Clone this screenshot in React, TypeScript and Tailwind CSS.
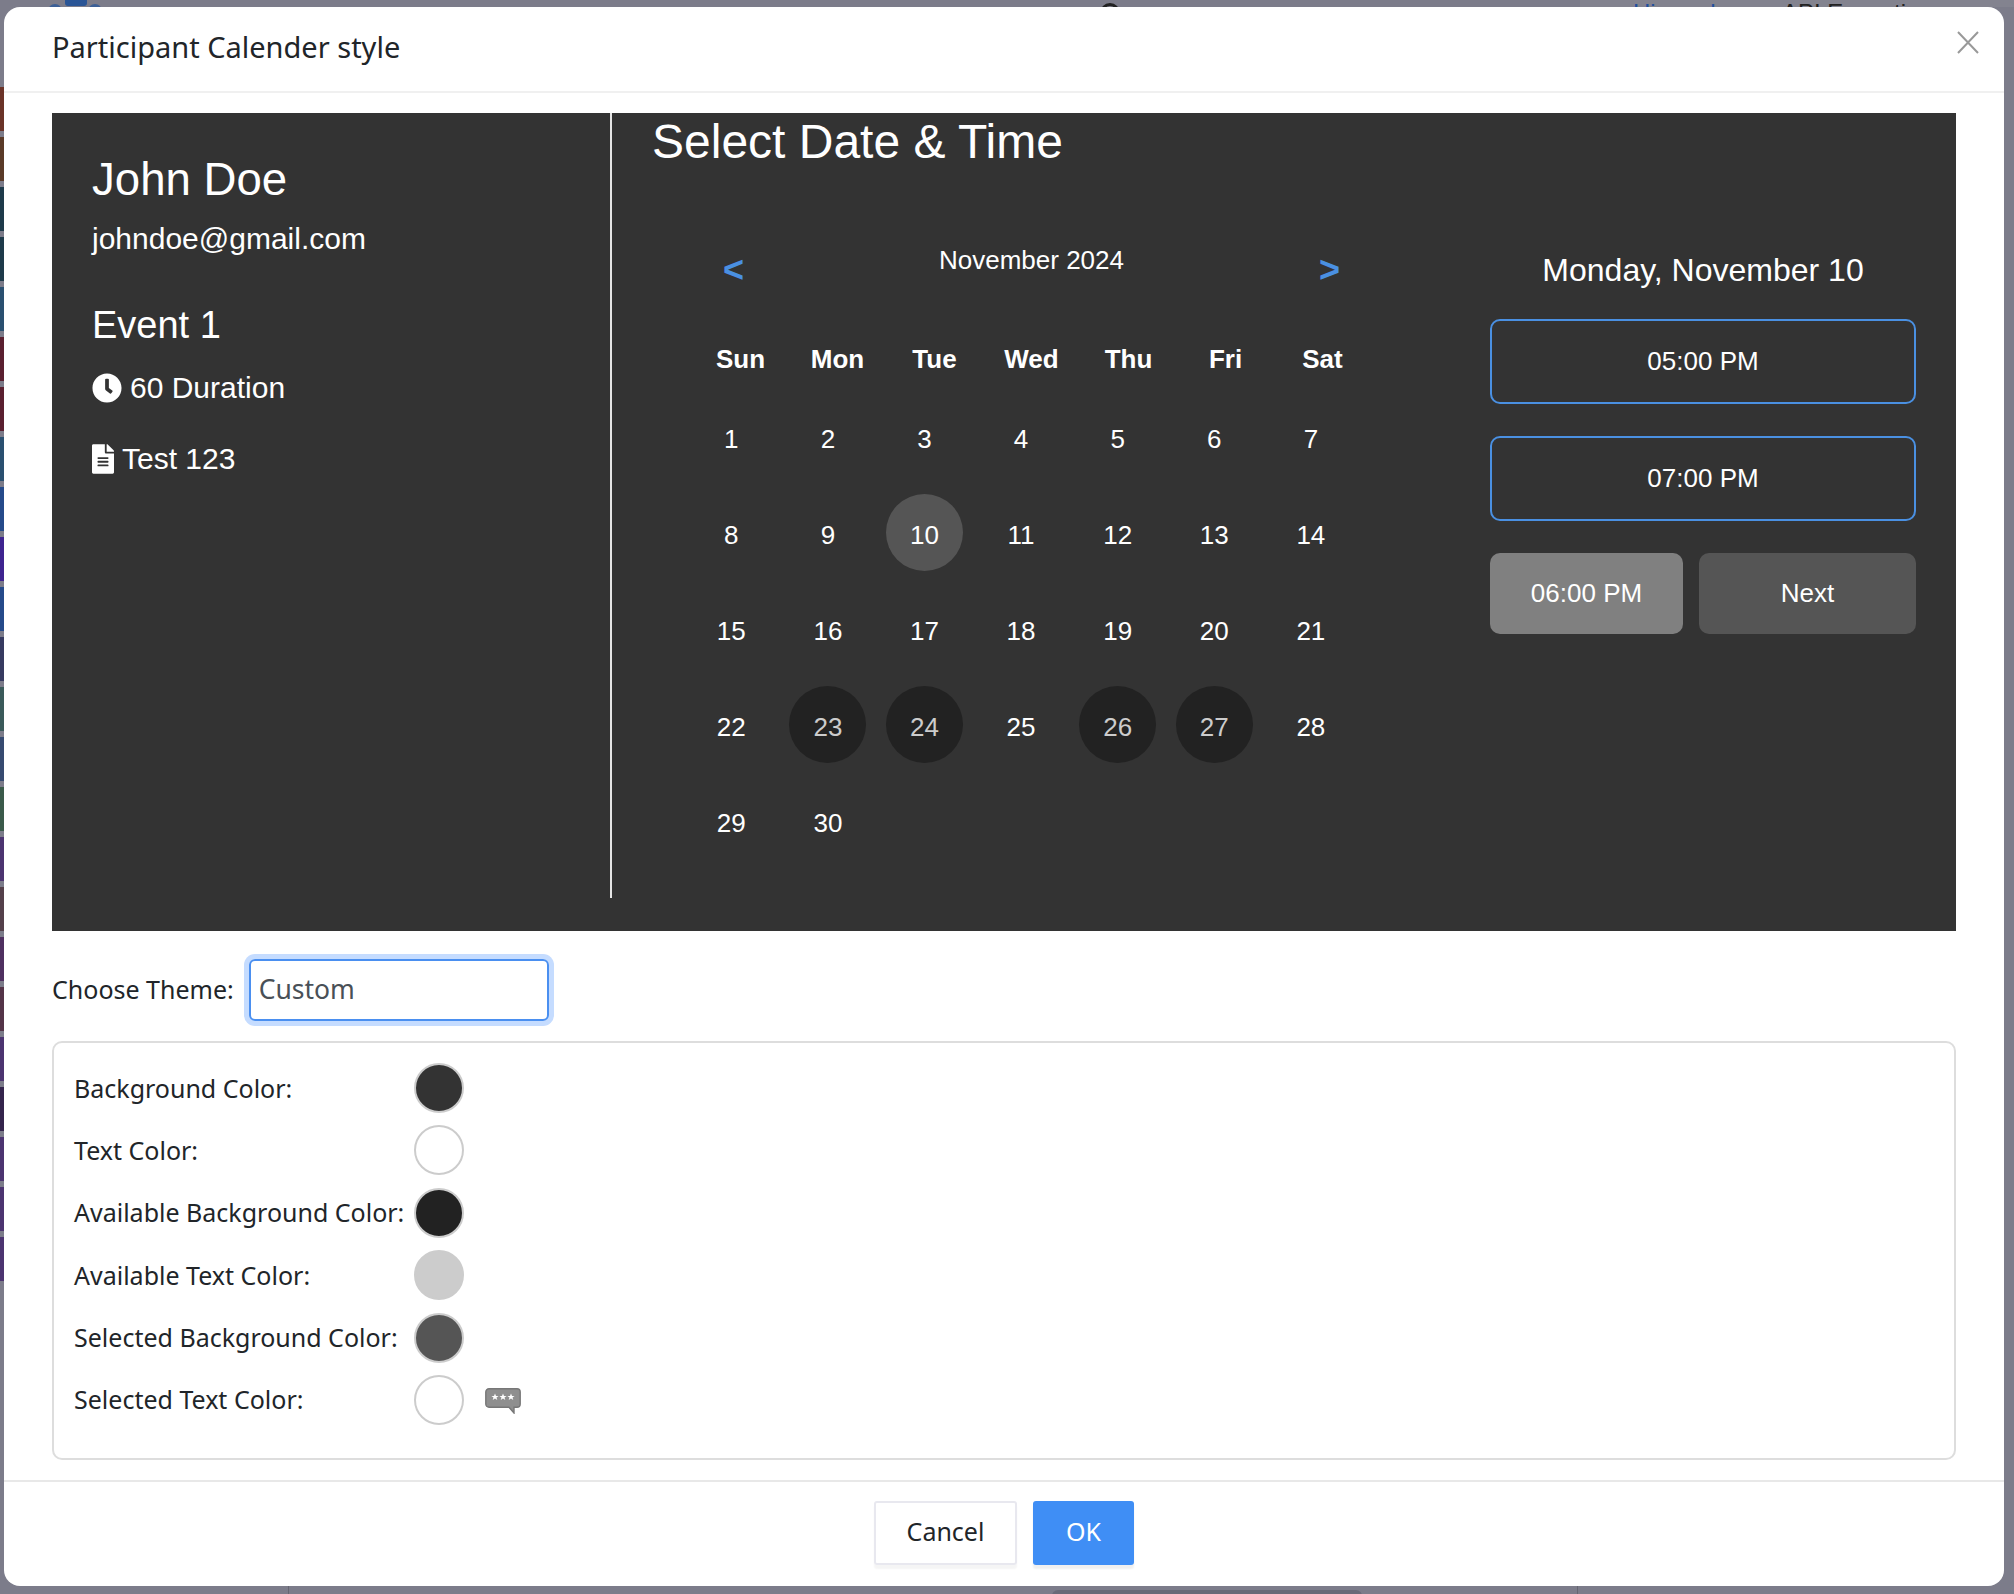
import React from "react";
import { FaClock, FaFileAlt } from "react-icons/fa";

const stripes = [
  "bg-[#6b3328]", "bg-[#5a3a28]", "bg-[#1e3a4a]", "bg-[#1e3a4a]", "bg-[#2a5070]", "bg-[#5a2030]",
  "bg-[#5a2030]", "bg-[#2a5070]", "bg-[#254a8a]", "bg-[#3e2490]", "bg-[#254a8a]", "bg-[#363a60]",
  "bg-[#3a5a5a]", "bg-[#364a70]", "bg-[#3a5a4a]", "bg-[#4c3470]", "bg-[#54404a]", "bg-[#4f3060]",
  "bg-[#543448]", "bg-[#4c3470]", "bg-[#34244c]", "bg-[#4c3470]", "bg-[#4c3470]", "bg-[#4c3470]",
];

const weeks: number[][] = [
  [1, 2, 3, 4, 5, 6, 7],
  [8, 9, 10, 11, 12, 13, 14],
  [15, 16, 17, 18, 19, 20, 21],
  [22, 23, 24, 25, 26, 27, 28],
  [29, 30],
];
const available = [23, 24, 26, 27];
const days = ["Sun", "Mon", "Tue", "Wed", "Thu", "Fri", "Sat"];

const colors: { label: string; cls: string; bubble?: boolean }[] = [
  { label: "Background Color:", cls: "bg-[#333333] border-[#cccccc]" },
  { label: "Text Color:", cls: "bg-white border-[#cccccc]" },
  { label: "Available Background Color:", cls: "bg-[#222222] border-[#cccccc]" },
  { label: "Available Text Color:", cls: "bg-[#cccccc] border-[#cccccc]" },
  { label: "Selected Background Color:", cls: "bg-[#555555] border-[#cccccc]" },
  { label: "Selected Text Color:", cls: "bg-white border-[#cccccc]", bubble: true },
];

function Bubble() {
  return (
    <svg width="36" height="26" viewBox="0 0 36 26" className="ml-[21px] mt-[2px]">
      <path
        d="M4 .8H32A3.2 3.2 0 0 1 35.2 4V16A3.2 3.2 0 0 1 32 19.2H29V25L24 19.2H4A3.2 3.2 0 0 1 .8 16V4A3.2 3.2 0 0 1 4 .8Z"
        fill="#8f8f8f"
        stroke="#777777"
        strokeWidth="1.4"
      />
      <polygon points="10,5.5 11,8 13.6,8 11.5,9.6 12.3,12 10,10.6 7.7,12 8.5,9.6 6.4,8 9,8" fill="#ffffff" />
      <polygon points="18,5.5 19,8 21.6,8 19.5,9.6 20.3,12 18,10.6 15.7,12 16.5,9.6 14.4,8 17,8" fill="#ffffff" />
      <polygon points="26,5.5 27,8 29.6,8 27.5,9.6 28.3,12 26,10.6 23.7,12 24.5,9.6 22.4,8 25,8" fill="#ffffff" />
    </svg>
  );
}

export default function App() {
  return (
    <div className="relative w-[2014px] h-[1594px] overflow-hidden bg-[#7c7c8a] pt-[7px] pl-[4px] font-['Liberation_Sans',Arial,sans-serif]">
      {/* page behind the dimmed backdrop */}
      <div className="absolute left-0 top-[87px] w-[4px] flex flex-col">
        {stripes.map((c, i) => (
          <div key={i} className={`h-[44px] mb-[6px] ${c}`} />
        ))}
      </div>
      <div className="absolute right-0 top-0 left-[1580px] h-[7px] bg-[#83838f] overflow-hidden">
        <span className="absolute left-[53px] top-[-1px] text-[24px] leading-[28px] text-[#1f4f9e]">Hierarchy</span>
        <span className="absolute left-[202px] top-[-1px] text-[24px] leading-[28px] text-[#222222]">API Execution</span>
      </div>
      <div className="absolute left-[65px] top-[-6px] w-[22px] h-[12px] rounded-[3px] bg-[#2a5596]" />
      <div className="absolute left-[48px] top-[4px] w-[14px] h-[14px] rounded-full bg-[#3c5f96]" />
      <div className="absolute left-[88px] top-[4px] w-[14px] h-[14px] rounded-full bg-[#3c5f96]" />
      <div className="absolute left-[1100px] top-[3px] w-[20px] h-[20px] rounded-full border-[3px] border-[#222222]" />
      <div className="absolute left-[288px] top-[1584px] w-px h-[10px] bg-[#666672]" />
      <div className="absolute left-[1577px] top-[1584px] w-px h-[10px] bg-[#666672]" />
      <div className="absolute left-[1052px] top-[1590px] w-[310px] h-[10px] rounded-t-[6px] bg-[#6a6a78]" />

      {/* modal */}
      <div className="relative w-[2000px] h-[1579px] rounded-[16px] bg-white flex flex-col font-['Noto_Sans',sans-serif] text-[#212529]">
        <div className="h-[86px] shrink-0 border-b-2 border-[#f0f0f0] pl-[48px] pr-[25px] flex items-center justify-between">
          <span className="text-[29px] leading-none mb-[5px]">Participant Calender style</span>
          <svg width="22" height="23" viewBox="0 0 22 23" className="mb-[14px]">
            <path d="M1 1L21 22M21 1L1 22" stroke="#999999" strokeWidth="2" fill="none" />
          </svg>
        </div>

        <div className="flex-1 px-[48px] pt-[20px]">
          {/* preview */}
          <div className="h-[818px] bg-[#333333] flex text-white font-['Liberation_Sans',Arial,sans-serif]">
            <div className="w-[560px] h-[785px] shrink-0 border-r-2 border-[#e5e5e5] pl-[40px] pt-[40px]">
              <div className="text-[45.6px] leading-[54px]">John Doe</div>
              <div className="text-[30px] leading-[36px] mt-[13.5px]">johndoe@gmail.com</div>
              <div className="text-[38px] leading-[44px] mt-[46px]">Event 1</div>
              <div className="flex items-center text-[30px] leading-[36px] mt-[23px]">
                <FaClock size={30} className="mr-[8px]" />
                60 Duration
              </div>
              <div className="flex items-center text-[30px] leading-[36px] mt-[35px]">
                <FaFileAlt size={30} className="w-[22px] h-[30px] mr-[8px]" />
                Test 123
              </div>
            </div>

            <div className="flex-1 min-w-0 pl-[40px] pt-[1px]">
              <div className="text-[48px] leading-[56px]">Select Date &amp; Time</div>
              <div className="flex mt-[67px]">
                {/* calendar */}
                <div className="ml-[31px] w-[696px] shrink-0">
                  <div className="flex justify-between pl-[40px] pr-[39px] h-[60px]">
                    <span className="text-[36px] leading-[36px] mt-[15px] font-bold text-[#4a90e2]">&lt;</span>
                    <span className="text-[26px] leading-[30px] mt-[8px]">November 2024</span>
                    <span className="text-[36px] leading-[36px] mt-[15px] font-bold text-[#4a90e2]">&gt;</span>
                  </div>
                  <div className="grid grid-cols-[repeat(7,97px)] pl-[9px] mt-[46px]">
                    {days.map((d) => (
                      <div key={d} className="text-center text-[26px] leading-[32px] font-bold">{d}</div>
                    ))}
                  </div>
                  <div className="grid grid-cols-[repeat(7,96.6px)] auto-rows-[96px] mt-[16px]">
                    {weeks.flat().map((n) => (
                      <div key={n} className="flex items-center justify-center text-[26px]">
                        <span
                          className={`w-[77px] h-[77px] mb-[5px] pt-[5px] rounded-full flex items-center justify-center ${
                            n === 10 ? "bg-[#555555]" : available.includes(n) ? "bg-[#222222] text-[#cccccc]" : ""
                          }`}
                        >
                          {n}
                        </span>
                      </div>
                    ))}
                  </div>
                </div>

                {/* times */}
                <div className="ml-[111px] w-[426px] shrink-0">
                  <div className="text-center text-[32px] leading-[40px] mt-[13px]">Monday, November 10</div>
                  <div className="h-[85px] mt-[29px] rounded-[10px] border-2 border-[#4a90e2] flex items-center justify-center text-[26px]">05:00 PM</div>
                  <div className="h-[85px] mt-[32px] rounded-[10px] border-2 border-[#4a90e2] flex items-center justify-center text-[26px]">07:00 PM</div>
                  <div className="flex gap-[16px] mt-[32px]">
                    <div className="w-[193px] h-[81px] rounded-[10px] bg-[#808080] flex items-center justify-center text-[26px]">06:00 PM</div>
                    <div className="flex-1 h-[81px] rounded-[10px] bg-[#555555] flex items-center justify-center text-[26px]">Next</div>
                  </div>
                </div>
              </div>
            </div>
          </div>

          {/* theme */}
          <div className="flex items-center mt-[28px] h-[61px]">
            <span className="text-[25px] leading-none mr-[15px]">Choose Theme:</span>
            <div className="w-[300px] h-[62px] rounded-[6px] border-2 border-[#4a8ff0] ring-[5px] ring-[#c5dcff] pl-[8px] flex items-center text-[26.5px] text-[#495057]">
              Custom
            </div>
          </div>

          {/* colours */}
          <div className="mt-[21px] h-[419px] rounded-[10px] border-2 border-[#dddddd] pl-[20px] pt-[20px] flex flex-col gap-[12.4px]">
            {colors.map((c) => (
              <div key={c.label} className="flex items-center h-[50px]">
                <span className="w-[340px] shrink-0 text-[25px] leading-none">{c.label}</span>
                <span className={`w-[50px] h-[50px] shrink-0 rounded-full border-2 ${c.cls}`} />
                {c.bubble && <Bubble />}
              </div>
            ))}
          </div>
        </div>

        <div className="h-[106px] shrink-0 border-t-2 border-[#e8e8e8] flex justify-center gap-[16px] pt-[19px]">
          <div className="w-[143px] h-[64px] border-2 border-[#e8e8ef] rounded-[3px] flex items-center justify-center pb-[3px] text-[25px] shadow-[0_4px_2px_#f5f5f5]">Cancel</div>
          <div className="w-[101px] h-[64px] bg-[#3f8ef5] text-white rounded-[3px] flex items-center justify-center pb-[3px] text-[25px] shadow-[0_4px_2px_#f0f0f0]">OK</div>
        </div>
      </div>
    </div>
  );
}
